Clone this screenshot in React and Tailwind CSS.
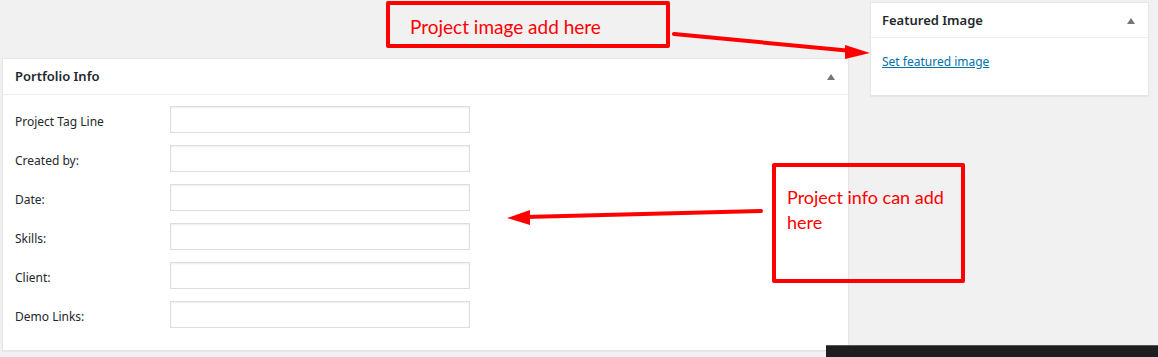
import React from 'react';

const fields = ['Project Tag Line', 'Created by:', 'Date:', 'Skills:', 'Client:', 'Demo Links:'];

const Toggle = () => (
  <span className="w-0 h-0 border-l-[4px] border-r-[4px] border-b-[6px] border-l-transparent border-r-transparent border-b-[#72777c]" />
);

const App = () => {
  return (
    <div
      className="relative h-[357px] w-[1158px] overflow-hidden bg-[#f1f1f1] text-[#23282d]"
      style={{ fontFamily: '"Noto Sans", "Open Sans", Arial, sans-serif' }}
    >
      <div className="flex items-start">
        {/* Portfolio Info */}
        <div className="ml-[2px] mt-[58px] w-[847px] border border-[#e5e5e5] bg-white shadow-[0_1px_1px_rgba(0,0,0,0.04)]">
          <div className="flex h-[36px] items-center justify-between border-b border-[#eeeeee] pl-[12px] pr-[13px] pt-[1px]">
            <h2 className="text-[13px] font-semibold">Portfolio Info</h2>
            <Toggle />
          </div>
          <div className="flex flex-col gap-[12px] pl-[12px] pt-[11px] pb-[22px]">
            {fields.map((label) => (
              <div key={label} className="flex items-start">
                <label className="w-[155px] pt-[7px] text-[12px] leading-[18px]">{label}</label>
                <input
                  type="text"
                  className="h-[27px] w-[300px] border border-[#dddddd] bg-white shadow-[inset_0_1px_2px_rgba(0,0,0,0.07)] outline-none"
                />
              </div>
            ))}
          </div>
        </div>

        {/* Featured Image */}
        <div className="ml-[21px] mt-[2px] w-[279px] border border-[#e5e5e5] bg-white shadow-[0_1px_1px_rgba(0,0,0,0.04)]">
          <div className="flex h-[35px] items-center justify-between border-b border-[#eeeeee] pl-[11px] pr-[13px] pt-[2px]">
            <h2 className="text-[13px] font-semibold">Featured Image</h2>
            <Toggle />
          </div>
          <div className="px-[11px] pt-[14px] pb-[25px] leading-[17px]">
            <a href="#" className="text-[12px] text-[#0073aa] underline">Set featured image</a>
          </div>
        </div>
      </div>

      {/* Annotations */}
      <div
        className="absolute left-[386px] top-[1px] flex h-[47px] w-[284px] items-center rounded-[2px] border-[4px] border-[#ff0000] pl-[20px] pt-[5px] text-[19px] text-[#ff0000]"
        style={{ fontFamily: 'Lato, "Open Sans", sans-serif' }}
      >
        Project image add here
      </div>
      <div
        className="absolute left-[772px] top-[163px] h-[120px] w-[193px] rounded-[2px] border-[4px] border-[#ff0000] pl-[11px] pt-[18px] text-[18px] leading-[25px] text-[#ff0000]"
        style={{ fontFamily: 'Lato, "Open Sans", sans-serif' }}
      >
        Project info can add
        <br />
        here
      </div>
      <svg className="absolute left-0 top-0" width="1158" height="357" viewBox="0 0 1158 357">
        <line x1="674" y1="34" x2="852" y2="51" stroke="#ff0000" strokeWidth="4" strokeLinecap="round" />
        <polygon points="870,53 845,45 845,59" fill="#ff0000" />
        <line x1="761" y1="211" x2="525" y2="217" stroke="#ff0000" strokeWidth="4" strokeLinecap="round" />
        <polygon points="507,218 530,210 530,225" fill="#ff0000" />
      </svg>

      {/* dark bar */}
      <div className="absolute bottom-0 left-[826px] h-[12px] w-[332px] border-t border-[#555555] bg-[#1e1e1e]" />
    </div>
  );
};

export default App;
